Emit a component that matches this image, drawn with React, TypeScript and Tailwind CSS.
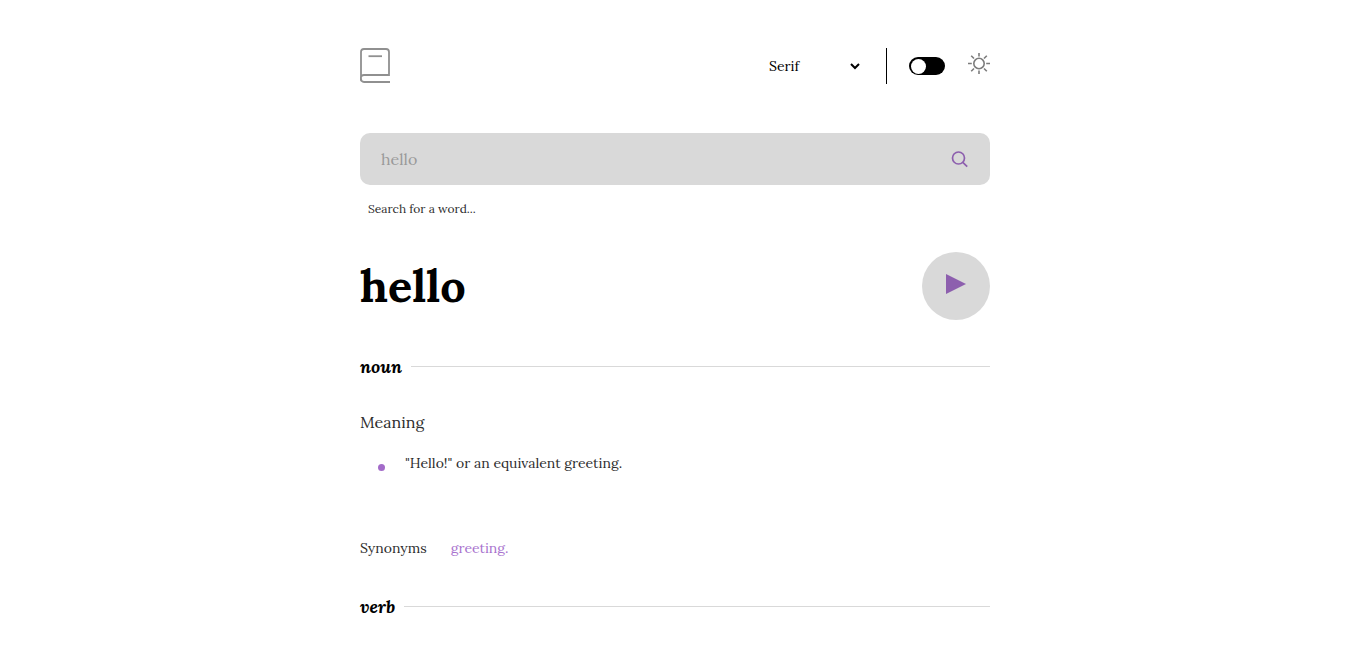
import { useState } from "react";

type Entry = {
  part: string;
  meanings: string[];
  synonyms: string[];
};

const entries: Entry[] = [
  {
    part: "noun",
    meanings: ['"Hello!" or an equivalent greeting.'],
    synonyms: ["greeting."],
  },
  { part: "verb", meanings: [], synonyms: [] },
];

function BookIcon() {
  return (
    <svg width="32" height="36" viewBox="0 0 32 36" fill="none" stroke="#909090" strokeWidth="1.8" aria-hidden="true">
      <path d="M30 34H4a3 3 0 0 1-3-3V4a3 3 0 0 1 3-3h22a3 3 0 0 1 3 3v23H4a3.500 3.500 0 0 0 0 7" />
      <path d="M8.500 8.200h13.500" />
    </svg>
  );
}

function SunIcon() {
  return (
    <svg width="22" height="22" viewBox="0 0 22 22" fill="none" stroke="#7c7c7c" strokeWidth="1.6" aria-hidden="true">
      <circle cx="11" cy="10.500" r="5.2" />
      <path d="M11 0v3.500M11 17.500V21M0 10.500h3.800M18.200 10.500H22M3.200 2.700l2.800 2.800M16 15.500l2.800 2.800M3.200 18.300l2.800-2.800M16 5.500l2.800-2.800" />
    </svg>
  );
}

function Header() {
  const [dark, setDark] = useState(false);
  return (
    <header className="flex h-9 items-center justify-between">
      <a href="#" aria-label="Dictionary home">
        <BookIcon />
      </a>
      <div className="flex h-9 items-center">
        <select aria-label="Font" defaultValue="Serif" className="mr-[23px] h-8 w-[98px] bg-transparent pl-0 text-sm text-black">
          <option>Serif</option>
          <option>Sans Serif</option>
          <option>Mono</option>
        </select>
        <span className="h-9 w-px bg-black" />
        <label className="ml-[22px] flex cursor-pointer items-center">
          <input
            type="checkbox"
            role="switch"
            aria-label="Dark mode"
            checked={dark}
            onChange={(e) => setDark(e.target.checked)}
            className="flex h-[18px] w-9 appearance-none items-center rounded-full bg-black px-0.5 before:size-[15px] before:rounded-full before:bg-white checked:justify-end"
          />
        </label>
        <span className="ml-[23px] pb-1">
          <SunIcon />
        </span>
      </div>
    </header>
  );
}

function SearchForm() {
  return (
    <form className="mt-[49px]" onSubmit={(e) => e.preventDefault()}>
      <div className="flex h-[52px] items-center rounded-[10px] bg-[#d9d9d9] pr-[22px] pl-[21px]">
        <input
          id="word"
          type="text"
          placeholder="hello"
          className="min-w-0 flex-1 bg-transparent text-base outline-none placeholder:text-[#999999]"
        />
        <button type="submit" aria-label="Search">
          <svg width="17" height="17" viewBox="0 0 17 17" fill="none" stroke="#8d5fae" strokeWidth="1.7" aria-hidden="true">
            <circle cx="7.500" cy="7" r="6" />
            <path d="M11.800 11.300l4.400 4.400" />
          </svg>
        </button>
      </div>
      <label htmlFor="word" className="mt-3.5 block pl-2 text-xs leading-5 text-[#2d2d2d]">
        Search for a word...
      </label>
    </form>
  );
}

function EntrySection({ entry }: { entry: Entry }) {
  return (
    <section className="mb-8">
      <div className="flex h-7 items-center gap-[9px]">
        <h2 className="pt-0.5 text-lg leading-7 font-bold italic">{entry.part}</h2>
        <hr className="flex-1 border-[#d9d9d9]" />
      </div>
      {entry.meanings.length > 0 && (
        <>
          <h3 className="mt-7 text-base leading-7 text-[#2d2d2d]">Meaning</h3>
          <ul className="mt-[15px]">
            {entry.meanings.map((meaning) => (
              <li key={meaning} className="flex items-start text-sm leading-6 text-[#2d2d2d]">
                <span className="mt-[13px] mr-5 ml-[18px] size-[7px] rounded-full bg-[#a36bc9]" />
                {meaning}
              </li>
            ))}
          </ul>
          <p className="mt-[61px] flex gap-6 text-sm leading-6 text-[#2d2d2d]">
            Synonyms
            {entry.synonyms.map((word) => (
              <a key={word} href="#" className="text-[#a872ce]">
                {word}
              </a>
            ))}
          </p>
        </>
      )}
    </section>
  );
}

export default function App() {
  return (
    <div className="bg-white font-['Lora','Liberation_Serif',serif] text-black">
      <main className="mx-auto max-w-[634px] pt-12 pl-1">
        <Header />
        <SearchForm />
        <div className="mt-[33px] mb-8 flex items-center justify-between">
          <h1 className="text-[45px] leading-[68px] font-bold">hello</h1>
          <button type="button" aria-label="Play pronunciation" className="flex size-[68px] items-center justify-center rounded-full bg-[#d9d9d9] pb-1">
            <svg width="20" height="20" viewBox="0 0 20 20" fill="#8d5fae" aria-hidden="true">
              <path d="M0 0l20 10L0 20z" />
            </svg>
          </button>
        </div>
        {entries.map((entry) => (
          <EntrySection key={entry.part} entry={entry} />
        ))}
      </main>
    </div>
  );
}
